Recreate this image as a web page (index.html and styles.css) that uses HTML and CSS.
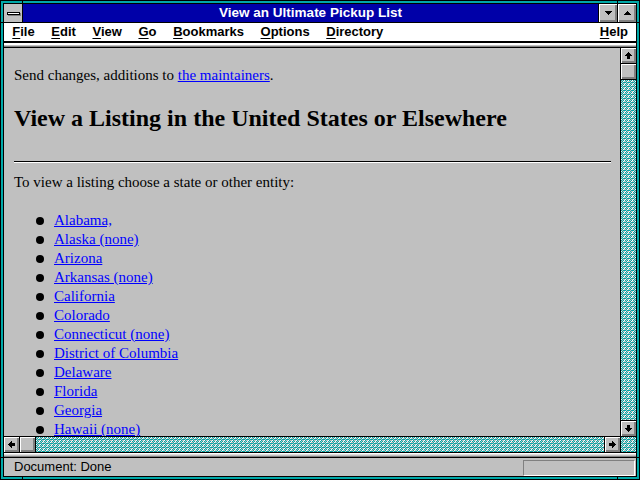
FILE: index.html
```html
<!DOCTYPE html>
<html lang="en">
<head>
    <meta charset="UTF-8">
    <title>View an Ultimate Pickup List</title>
    <link rel="stylesheet" href="styles.css">
</head>
<body>
<svg class="defs" width="0" height="0">
    <defs>
        <pattern id="dither" width="4" height="4" patternUnits="userSpaceOnUse">
            <rect width="4" height="4" fill="#00a8a8"/>
            <rect x="1" y="0" width="1" height="1" fill="#c0c0c0"/>
            <rect x="3" y="1" width="1" height="1" fill="#c0c0c0"/>
            <rect x="1" y="2" width="1" height="1" fill="#c0c0c0"/>
            <rect x="3" y="3" width="1" height="1" fill="#c0c0c0"/>
            <rect x="0" y="1" width="1" height="1" fill="#c0c0c0"/>
            <rect x="2" y="3" width="1" height="1" fill="#c0c0c0"/>
            <rect x="3" y="0" width="1" height="1" fill="#ffffff"/>
            <rect x="2" y="1" width="1" height="1" fill="#ffffff"/>
            <rect x="0" y="3" width="1" height="1" fill="#ffffff"/>
        </pattern>
    </defs>
</svg>
<div class="window">
    <div class="mark mark-v mark-top-left"></div>
    <div class="mark mark-v mark-top-right"></div>
    <div class="mark mark-v mark-bottom-left"></div>
    <div class="mark mark-v mark-bottom-right"></div>
    <div class="mark mark-h mark-left-top"></div>
    <div class="mark mark-h mark-right-top"></div>
    <div class="mark mark-h mark-left-bottom"></div>
    <div class="mark mark-h mark-right-bottom"></div>

    <div class="frame">
        <div class="titlebar">
            <div class="sysmenu"><div class="sysbar"></div></div>
            <div class="caption">View an Ultimate Pickup List</div>
            <div class="winbtn">
                <svg width="7" height="4" viewBox="0 0 7 4" shape-rendering="crispEdges"><path d="M0 0h7v1h-1v1h-1v1h-1v1h-1v-1h-1v-1h-1v-1h-1z"/></svg>
            </div>
            <div class="winbtn">
                <svg width="7" height="4" viewBox="0 0 7 4" shape-rendering="crispEdges"><path d="M3 0h1v1h1v1h1v1h1v1h-7v-1h1v-1h1v-1h1z"/></svg>
            </div>
        </div>

        <div class="menubar">
            <span class="menu-item"><u>F</u>ile</span>
            <span class="menu-item"><u>E</u>dit</span>
            <span class="menu-item"><u>V</u>iew</span>
            <span class="menu-item"><u>G</u>o</span>
            <span class="menu-item"><u>B</u>ookmarks</span>
            <span class="menu-item"><u>O</u>ptions</span>
            <span class="menu-item"><u>D</u>irectory</span>
            <span class="menu-item help"><u>H</u>elp</span>
        </div>
        <div class="edge-top"></div>

        <div class="main">
            <div class="view">
                <p class="intro">Send changes, additions to <a href="#">the maintainers</a>.</p>
                <h1>View a Listing in the United States or Elsewhere</h1>
                <hr>
                <p class="choose">To view a listing choose a state or other entity:</p>
                <ul class="states">
                    <li><a href="#">Alabama,</a></li>
                    <li><a href="#">Alaska (none)</a></li>
                    <li><a href="#">Arizona</a></li>
                    <li><a href="#">Arkansas (none)</a></li>
                    <li><a href="#">California</a></li>
                    <li><a href="#">Colorado</a></li>
                    <li><a href="#">Connecticut (none)</a></li>
                    <li><a href="#">District of Columbia</a></li>
                    <li><a href="#">Delaware</a></li>
                    <li><a href="#">Florida</a></li>
                    <li><a href="#">Georgia</a></li>
                    <li><a href="#">Hawaii (none)</a></li>
                </ul>
            </div>

            <div class="vscroll">
                <div class="sbtn sbtn-first">
                    <svg width="7" height="7" viewBox="0 0 7 7" shape-rendering="crispEdges"><path d="M3 0h1v1h1v1h1v1h1v1h-2v3h-3v-3h-2v-1h1v-1h1v-1h1z"/></svg>
                </div>
                <div class="thumb thumb-v"></div>
                <div class="track">
                    <svg width="640" height="480" shape-rendering="crispEdges"><rect width="640" height="480" fill="url(#dither)"/></svg>
                </div>
                <div class="sbtn sbtn-last">
                    <svg class="rot-180" width="7" height="7" viewBox="0 0 7 7" shape-rendering="crispEdges"><path d="M3 0h1v1h1v1h1v1h1v1h-2v3h-3v-3h-2v-1h1v-1h1v-1h1z"/></svg>
                </div>
            </div>

            <div class="hscroll">
                <div class="sbtn sbtn-first">
                    <svg class="rot-left" width="7" height="7" viewBox="0 0 7 7" shape-rendering="crispEdges"><path d="M3 0h1v1h1v1h1v1h1v1h-2v3h-3v-3h-2v-1h1v-1h1v-1h1z"/></svg>
                </div>
                <div class="thumb thumb-h"></div>
                <div class="track">
                    <svg width="640" height="480" shape-rendering="crispEdges"><rect width="640" height="480" fill="url(#dither)"/></svg>
                </div>
                <div class="sbtn sbtn-last">
                    <svg class="rot-right" width="7" height="7" viewBox="0 0 7 7" shape-rendering="crispEdges"><path d="M3 0h1v1h1v1h1v1h1v1h-2v3h-3v-3h-2v-1h1v-1h1v-1h1z"/></svg>
                </div>
            </div>

            <div class="corner">
                <svg width="16" height="16" shape-rendering="crispEdges"><rect width="16" height="16" fill="url(#dither)"/></svg>
            </div>
        </div>

        <div class="edge-bottom"></div>
        <div class="statusbar">
            <span class="status-text">Document: Done</span>
            <div class="progress"></div>
        </div>
    </div>
</div>
</body>
</html>
```

FILE: styles.css
```css
/*Window*/
body {
    margin: 0;
    padding: 0;
    background-color: #c0c0c0;
}

.defs {
    position: absolute;
    width: 0;
    height: 0;
}

.window {
    position: relative;
    width: 640px;
    height: 480px;
    box-sizing: border-box;
    border: 1px solid #000;
    padding: 2px;
    background-color: #00a8a8;
}

.frame {
    height: 100%;
    box-sizing: border-box;
    border: 1px solid #000;
    display: flex;
    flex-direction: column;
    background-color: #c0c0c0;
}

/* little notches in the sizing border */
.mark {
    position: absolute;
    background-color: #000;
}
.mark-v { width: 1px; height: 4px; }
.mark-h { width: 4px; height: 1px; }
.mark-top-left { left: 21px; top: -1px; }
.mark-top-right { left: 616px; top: -1px; }
.mark-bottom-left { left: 21px; top: 475px; }
.mark-bottom-right { left: 616px; top: 475px; }
.mark-left-top { left: -1px; top: 21px; }
.mark-right-top { left: 635px; top: 21px; }
.mark-left-bottom { left: -1px; top: 456px; }
.mark-right-bottom { left: 635px; top: 456px; }

/*Title bar*/
.titlebar {
    display: flex;
    flex-direction: row;
    height: 18px;
    border-bottom: 1px solid #000;
    flex-shrink: 0;
}

.sysmenu {
    width: 18px;
    border-right: 1px solid #000;
    background-color: #c0c0c0;
    display: flex;
    align-items: center;
    justify-content: center;
}

.sysbar {
    width: 11px;
    height: 1px;
    border: 1px solid #000;
    background-color: #fff;
    box-shadow: 1px 1px 0 #808080;
}

.caption {
    flex: 1;
    background-color: #0000a8;
    color: #fff;
    font-family: "Liberation Sans", Arial, sans-serif;
    font-weight: bold;
    font-size: 13.5px;
    line-height: 18px;
    text-align: center;
}

.winbtn {
    width: 18px;
    border-left: 1px solid #000;
    background-color: #c0c0c0;
    box-shadow: inset 1px 1px #fff, inset -1px -1px #808080, inset -2px -2px #808080;
    display: flex;
    align-items: center;
    justify-content: center;
}

.winbtn svg {
    display: block;
    margin-top: -1px;
}

/*Menu*/
.menubar {
    display: flex;
    flex-direction: row;
    height: 18px;
    background-color: #fff;
    border-bottom: 1px solid #000;
    flex-shrink: 0;
    font-family: "Liberation Sans", Arial, sans-serif;
    font-weight: bold;
    font-size: 13px;
    line-height: 18px;
    color: #000;
}

.menu-item {
    padding: 0 8.3px;
}

.menu-item u {
    text-underline-offset: 2px;
}

.help {
    margin-left: auto;
    padding-right: 8px;
}

.edge-top {
    height: 6px;
    flex-shrink: 0;
    background: linear-gradient(to bottom, #000 0 1px, #fff 1px 3px, #c0c0c0 3px 4px, #808080 4px 5px, #000 5px 6px);
}

.edge-bottom {
    height: 6px;
    flex-shrink: 0;
    background: linear-gradient(to bottom, #000 0 1px, #fff 1px 2px, #dfdfdf 2px 3px, #c0c0c0 3px 4px, #808080 4px 5px, #000 5px 6px);
}

/*Document view*/
.main {
    flex: 1;
    min-height: 0;
    display: grid;
    grid-template-columns: 1fr 16px;
    grid-template-rows: 1fr 16px;
}

.view {
    overflow: hidden;
    padding: 19px 9px 0 10px;
    font-family: "Liberation Serif", "Times New Roman", serif;
    font-size: 15px;
    line-height: 17px;
    color: #000;
}

.view a {
    color: #0000ff;
    text-decoration: underline;
}

.intro {
    margin: 0;
}

h1 {
    margin: 20px 0 0 0;
    font-size: 24px;
    line-height: 28px;
    font-weight: bold;
}

hr {
    margin: 29px 0 0 0;
    height: 0;
    border: none;
    border-top: 1px solid #000;
    border-bottom: 1px solid #fff;
}

.choose {
    margin: 11px 0 0 0;
}

.states {
    list-style: none;
    margin: 20px 0 0 0;
    padding: 0;
}

.states li {
    display: flex;
    align-items: center;
    line-height: 19px;
    height: 19px;
}

.states li::before {
    content: "";
    width: 8px;
    height: 8px;
    border-radius: 50%;
    background-color: #000;
    margin-left: 22px;
    margin-right: 10px;
    flex-shrink: 0;
}

/*Scrollbars*/
.vscroll {
    border-left: 1px solid #000;
    display: flex;
    flex-direction: column;
    min-height: 0;
}

.hscroll {
    border-top: 1px solid #000;
    display: flex;
    flex-direction: row;
    min-width: 0;
}

.sbtn, .thumb {
    background-color: #c0c0c0;
    box-shadow: inset 1px 1px #fff, inset -1px -1px #808080, inset -2px -2px #808080;
    flex-shrink: 0;
}

.sbtn {
    display: flex;
    align-items: center;
    justify-content: center;
}

.sbtn svg {
    display: block;
}

.vscroll .sbtn, .vscroll .thumb {
    height: 15px;
}
.vscroll .sbtn-first, .vscroll .thumb { border-bottom: 1px solid #000; }
.vscroll .sbtn-last { border-top: 1px solid #000; }

.hscroll .sbtn, .hscroll .thumb {
    width: 15px;
}
.hscroll .sbtn-first, .hscroll .thumb { border-right: 1px solid #000; }
.hscroll .sbtn-last { border-left: 1px solid #000; }

.rot-180 { transform: rotate(180deg); }
.rot-left { transform: rotate(-90deg); }
.rot-right { transform: rotate(90deg); }

.track {
    flex: 1 1 0;
    min-width: 0;
    min-height: 0;
    overflow: hidden;
}

.track svg, .corner svg {
    display: block;
}

.corner {
    overflow: hidden;
    border-top: 1px solid #000;
    border-left: 1px solid #000;
}

/*Status bar*/
.statusbar {
    height: 18px;
    flex-shrink: 0;
    display: flex;
    flex-direction: row;
    align-items: center;
    justify-content: space-between;
    padding: 0 1px 0 10px;
    font-family: "Liberation Sans", Arial, sans-serif;
    font-size: 13px;
    line-height: 16px;
    color: #000;
}

.status-text {
    margin-top: -1px;
}

.progress {
    width: 110px;
    height: 14px;
    margin-top: 2px;
    border-top: 1px solid #808080;
    border-left: 1px solid #808080;
    border-bottom: 1px solid #fff;
    border-right: 1px solid #fff;
}
```
